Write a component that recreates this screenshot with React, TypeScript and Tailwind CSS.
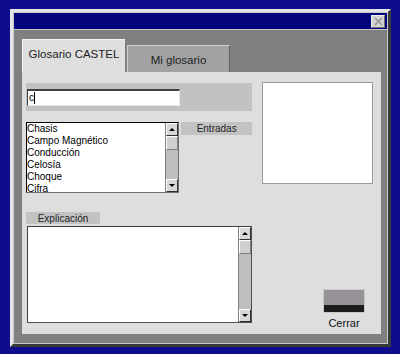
import React from "react";

const font = { fontFamily: '"Liberation Sans", Arial, sans-serif' };

function ScrollBar({ height }: { height: number }) {
  return (
    <div className="flex flex-col w-[13px] bg-[#bebebe] border-l border-[#808080]" style={{ height }}>
      <div className="h-[13px] bg-[#d8d8d8] border-t border-l border-white border-r border-b border-r-[#303030] border-b-[#303030] flex items-center justify-center">
        <div className="w-0 h-0 border-l-[3px] border-r-[3px] border-b-[3px] border-l-transparent border-r-transparent border-b-black" />
      </div>
      <div className="h-[14px] bg-[#d0d0d0] border-t border-l border-white border-r border-b border-r-[#808080] border-b-[#808080]" />
      <div className="flex-1" />
      <div className="h-[13px] bg-[#d8d8d8] border-t border-l border-white border-r border-b border-r-[#303030] border-b-[#303030] flex items-center justify-center">
        <div className="w-0 h-0 border-l-[3px] border-r-[3px] border-t-[3px] border-l-transparent border-r-transparent border-t-black" />
      </div>
    </div>
  );
}

const terms = ["Chasis", "Campo Magnético", "Conducción", "Celosía", "Choque", "Cifra"];

export default function App() {
  return (
    <div className="w-[400px] h-[354px] bg-[#0d0d8e] pl-[10px] pt-[9px]" style={font}>
      {/* window frame */}
      <div className="w-[381px] h-[338px] border-l-[3px] border-t-[3px] border-[#e4e4e4] border-r-[3px] border-b-[3px] border-r-[#3a3a3a] border-b-[#3a3a3a] bg-[#c8c8c8] p-px flex flex-col">
        {/* title bar */}
        <div className="h-[16px] bg-[#04047c] flex items-center justify-end pr-[2px]">
          <div className="w-[14px] h-[13px] bg-[#d4d4d4] border border-[#f0f0f0] border-r-[#707070] border-b-[#707070] flex items-center justify-center">
            <svg width="9" height="9" viewBox="0 0 9 9">
              <path d="M1 1 L8 8 M8 1 L1 8" stroke="#909090" strokeWidth="1.4" />
            </svg>
          </div>
        </div>

        {/* body */}
        <div className="flex-1 bg-[#808080] mt-px pt-[9px] pl-[8px] pr-[6px] pb-[9px] flex flex-col">
          {/* tabs */}
          <div className="h-[33px] flex items-start">
            <div className="w-[103px] h-[33px] bg-[#dedede] border-t border-l border-[#f4f4f4] flex items-center justify-center text-[11.5px] text-[#222] pb-[2px]">
              Glosario CASTEL
            </div>
            <div className="w-[103px] h-[27px] mt-[6px] ml-[2px] bg-[#a2a2a2] border-t border-l border-[#d0d0d0] border-r border-r-[#606060] flex items-center justify-center text-[11.5px] text-[#222] pt-[3px]">
              Mi glosario
            </div>
          </div>

          {/* panel */}
          <div className="flex-1 bg-[#dedede] flex">
            {/* left column */}
            <div className="w-[226px] ml-[4px] flex flex-col">
              <div className="mt-[11px] h-[28px] bg-[#c2c2c2] flex items-center pl-px">
                <div className="w-[153px] h-[17px] bg-white border-t-2 border-l border-[#404040] border-r border-b border-r-[#e8e8e8] border-b-[#e8e8e8] flex items-center text-[10px] leading-none text-black">
                  <span className="pl-px">c</span>
                  <span className="w-px h-[12px] bg-black" />
                </div>
              </div>

              <div className="mt-[11px] flex">
                <div className="w-[154px] h-[71px] bg-white border-t border-l border-black border-r border-b border-r-[#707070] border-b-[#707070] flex">
                  <div className="flex-1 overflow-hidden text-[10px] leading-[12px] text-black">
                    {terms.map((t) => (
                      <div key={t} className="h-[12px]">{t}</div>
                    ))}
                  </div>
                  <ScrollBar height={69} />
                </div>
                <div className="ml-[2px] w-[71px] h-[13px] bg-[#c2c2c2] flex items-center justify-center text-[10px] text-[#222]">
                  Entradas
                </div>
              </div>

              <div className="mt-[19px] w-[74px] h-[12px] bg-[#c2c2c2] flex items-center justify-center text-[10px] text-[#222]">
                Explicación
              </div>
              <div className="mt-[2px] ml-px w-[225px] h-[97px] bg-white border-t border-l border-[#404040] border-r border-b border-r-[#505050] border-b-[#505050] flex justify-end">
                <ScrollBar height={95} />
              </div>
            </div>

            {/* right column */}
            <div className="ml-[10px] flex flex-col">
              <div className="mt-[10px] w-[111px] h-[102px] bg-white border border-[#9a9a9a]" />
              <div className="mt-[105px] ml-[61px] w-[42px] flex flex-col items-center">
                <div className="w-[42px] h-[24px] flex flex-col border border-[#c8c8c8]">
                  <div className="flex-1 bg-[#979297]" />
                  <div className="h-[7px] bg-[#1c1c1c]" />
                </div>
                <div className="mt-[2px] text-[11px] text-[#111]">Cerrar</div>
              </div>
            </div>
          </div>
        </div>
      </div>
    </div>
  );
}
